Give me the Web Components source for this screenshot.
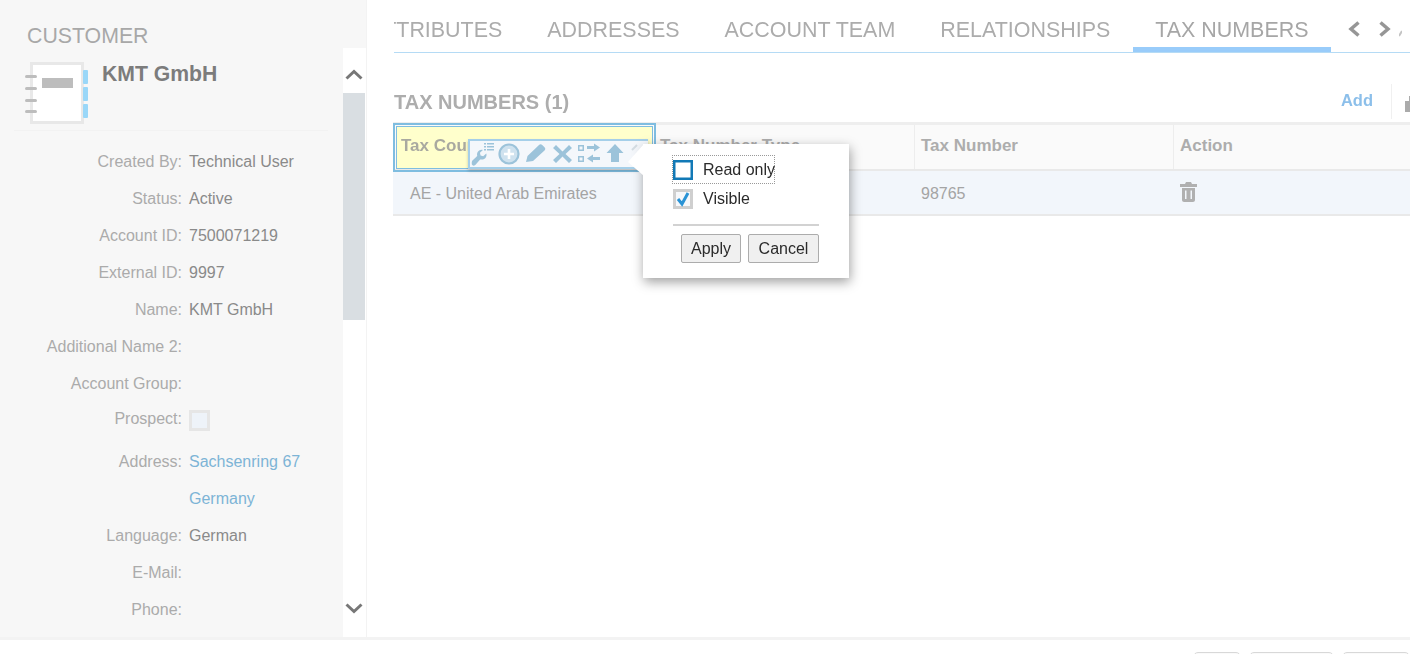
<!DOCTYPE html>
<html lang="en">
<head>
<meta charset="utf-8">
<title>Customer</title>
<style>
  html, body { margin: 0; height: 100%; overflow: hidden; background: #fff; }
  body { font-family: "Liberation Sans", Arial, sans-serif; }
</style>
</head>
<body>
<crm-app></crm-app>
<script>
"use strict";

class CrmField extends HTMLElement {
  constructor() {
    super();
    this.attachShadow({ mode: "open" });
    this.shadowRoot.innerHTML = `
      <style>
        :host { display: grid; grid-template-columns: 182px 1fr; column-gap: 7px; height: 37px; align-items: center; font-size: 16px; }
        :host([tall]) { height: 41px; align-items: start; }
        :host([tall]) #label, :host([tall]) #value { padding-top: 8px; }
        #label { text-align: right; color: #ababab; white-space: nowrap; }
        #value { color: #8a8a8a; white-space: nowrap; }
        :host([link]) #value { color: #7db4d6; }
      </style>
      <div id="label"></div>
      <div id="value"><slot></slot></div>`;
  }
  connectedCallback() {
    this.shadowRoot.querySelector("#label").textContent = this.getAttribute("label") || "";
  }
}
customElements.define("crm-field", CrmField);

class CrmScrollbar extends HTMLElement {
  constructor() {
    super();
    this.attachShadow({ mode: "open" });
    this.shadowRoot.innerHTML = `
      <style>
        :host { display: flex; flex-direction: column; width: 23px; margin-top: 48px; background: #fff; }
        #up { height: 45px; display: flex; align-items: center; justify-content: center; padding-top: 8px; box-sizing: border-box; }
        #track { flex: 1; }
        #thumb { height: 227px; background: #d9dee2; margin-right: 1px; }
        #down { height: 60px; display: flex; justify-content: center; padding-top: 26px; box-sizing: border-box; }
        svg { display: block; margin-left: -2px; }
      </style>
      <div id="up"><svg width="18" height="11" viewBox="0 0 18 11"><path d="M1.500 9.500 9 2.500l7.500 7" fill="none" stroke="#777" stroke-width="3"/></svg></div>
      <div id="track"><div id="thumb"></div></div>
      <div id="down"><svg width="18" height="11" viewBox="0 0 18 11"><path d="M1.500 1.500 9 8.500l7.500-7" fill="none" stroke="#777" stroke-width="3"/></svg></div>`;
  }
}
customElements.define("crm-scrollbar", CrmScrollbar);

class CrmSidebar extends HTMLElement {
  constructor() {
    super();
    this.attachShadow({ mode: "open" });
    this.shadowRoot.innerHTML = `
      <style>
        :host { display: flex; width: 366px; flex: none; background: #f7f7f7; }
        #content { width: 343px; flex: none; overflow: hidden; }
        h2 { margin: 24px 0 0 27px; font-size: 21.300px; line-height: 24px; font-weight: normal; color: #a8a8a8; }
        #head { display: flex; margin: 14px 0 0 25px; height: 62px; }
        #head svg { display: block; flex: none; }
        #name { margin: 0 0 0 14px; font-size: 21.200px; line-height: 24px; font-weight: bold; color: #7c7c7c; }
        hr { border: 0; height: 1px; background: #f2f2f2; margin: 6px 15px 12px 14px; }
      </style>
      <div id="content">
        <h2>CUSTOMER</h2>
        <div id="head">
          <svg width="63" height="62" viewBox="0 0 63 62">
            <rect x="6.500" y="1.500" width="51" height="59" fill="#fff" stroke="#e8e8e8" stroke-width="3"/>
            <g fill="#bdbdbd">
              <rect x="0" y="13" width="12" height="3" rx="1.500"/>
              <rect x="0" y="25" width="12" height="3" rx="1.500"/>
              <rect x="0" y="37" width="12" height="3" rx="1.500"/>
              <rect x="0" y="48" width="12" height="3" rx="1.500"/>
              <rect x="17" y="16" width="31" height="10"/>
            </g>
            <g fill="#9ad7f8">
              <rect x="58" y="8" width="5" height="14" rx="1"/>
              <rect x="58" y="25" width="5" height="14" rx="1"/>
              <rect x="58" y="42" width="5" height="14" rx="1"/>
            </g>
          </svg>
          <p id="name">KMT GmbH</p>
        </div>
        <hr>
        <crm-field label="Created By:">Technical User</crm-field>
        <crm-field label="Status:">Active</crm-field>
        <crm-field label="Account ID:">7500071219</crm-field>
        <crm-field label="External ID:">9997</crm-field>
        <crm-field label="Name:">KMT GmbH</crm-field>
        <crm-field label="Additional Name 2:"></crm-field>
        <crm-field label="Account Group:"></crm-field>
        <crm-field label="Prospect:" tall><svg width="21" height="21" style="display:block"><rect x="1.500" y="1.500" width="18" height="18" fill="#eef3f9" stroke="#e6e6e6" stroke-width="3"/></svg></crm-field>
        <crm-field label="Address:" link>Sachsenring 67</crm-field>
        <crm-field label="" link>Germany</crm-field>
        <crm-field label="Language:">German</crm-field>
        <crm-field label="E-Mail:"></crm-field>
        <crm-field label="Phone:"></crm-field>
      </div>
      <crm-scrollbar></crm-scrollbar>`;
  }
}
customElements.define("crm-sidebar", CrmSidebar);

class CrmTabs extends HTMLElement {
  constructor() {
    super();
    this.attachShadow({ mode: "open" });
    this.shadowRoot.innerHTML = `
      <style>
        :host { display: flex; height: 53px; box-sizing: border-box; margin-left: 1px; border-bottom: 1px solid #b5dbf5; font-size: 21.450px; color: #acacac; }
        #scroller { display: flex; justify-content: flex-end; width: 937px; flex: none; overflow: hidden; }
        .tab { flex: none; padding: 18px 22.500px 0; line-height: 25px; height: 52px; box-sizing: border-box; white-space: nowrap; }
        .tab.active { border-bottom: 5px solid #99ccfa; color: #a6a6a6; }
        #nav { display: flex; gap: 17px; padding: 21px 0 0 16px; }
        svg { display: block; flex: none; }
      </style>
      <div id="scroller">
        <div class="tab">ATTRIBUTES</div>
        <div class="tab">ADDRESSES</div>
        <div class="tab">ACCOUNT TEAM</div>
        <div class="tab">RELATIONSHIPS</div>
        <div class="tab active">TAX NUMBERS</div>
      </div>
      <div id="nav">
        <svg width="14" height="16" viewBox="0 0 14 16"><path d="M11.500 1.500 4 8l7.500 6.500" fill="none" stroke="#969696" stroke-width="3.500"/></svg>
        <svg width="14" height="16" viewBox="0 0 14 16"><path d="M2.500 1.500 10 8l-7.500 6.500" fill="none" stroke="#969696" stroke-width="3.500"/></svg>
        <svg width="3" height="16" viewBox="0 0 3 16" style="margin-left:-10px"><path d="M3 10 0 15" stroke="#c4c4c4" stroke-width="2"/></svg>
      </div>`;
  }
}
customElements.define("crm-tabs", CrmTabs);

class CrmToolbar extends HTMLElement {
  constructor() {
    super();
    this.attachShadow({ mode: "open" });
    this.shadowRoot.innerHTML = `
      <style>
        :host { display: block; position: absolute; left: 75px; top: 14px; width: 180px; height: 30px; box-sizing: border-box; background: #f4f7fb; border: 2px solid #a5cfe9; border-right: 0; box-shadow: 0 2px 3px rgba(0,0,0,.2); }
        svg { display: block; }
      </style>
      <svg width="178" height="26" viewBox="0 0 178 26">
        <g fill="#9cc3da">
          <path transform="translate(0 3) scale(.88)" d="M2 22.500c0 1.500 1.500 2.500 3 2 .8-.3 1.300-.9 1.800-1.500l4.700-5.500c2.800.6 5.400-.3 6.700-2.800.7-1.300.7-2.700.3-3.900l-3.500 3.200-3-1-.7-3 3.400-3.200c-1.700-.5-3.600-.1-5 1.200-1.600 1.500-2 3.500-1.500 5.600l-5.700 5.400c-.3.800-.5 1.500-.5 2z"/>
          <rect x="14" y="2" width="2" height="1.500"/><rect x="17" y="2" width="7" height="1.500"/>
          <rect x="14" y="5" width="2" height="1.500"/><rect x="17" y="5" width="7" height="1.500"/>
          <rect x="14" y="8" width="2" height="1.500"/><rect x="17" y="8" width="7" height="1.500"/>
          <path d="M56 21l1.500-6L69 4c1-1 2.200-1 3.200 0l2.300 2.300c1 1 1 2.200 0 3.200L63 20z"/>
          <path d="M83 7l3-3 6.500 6.500L99 4l3 3-6.500 6 6.500 6-3 3-6.500-6.500L86 22l-3-3 6.500-6z"/>
          <path d="M108 4h6v6h-6zM109.500 5.500v3h3v-3zM108 15h6v6h-6zM109.500 16.500v3h3v-3z" fill-rule="evenodd"/>
          <path d="M117 5h7V2.500l6 4-6 4V8h-7zM130 16h-7v-2.500l-6 4 6 4V19h7z"/>
          <path d="M145 3l8.500 9H149v9h-8v-9h-4.500z"/>
        </g>
        <circle cx="39" cy="13" r="9.500" fill="#cfe2ef" stroke="#9cc3da" stroke-width="2.200"/>
        <path d="M39 8v10M34 13h10" stroke="#fff" stroke-width="2.600"/>
        <path d="M167 4l-5 5" stroke="#d4dde3" stroke-width="2"/>
      </svg>`;
  }
}
customElements.define("crm-toolbar", CrmToolbar);

class CrmPopover extends HTMLElement {
  constructor() {
    super();
    this.attachShadow({ mode: "open" });
    this.shadowRoot.innerHTML = `
      <style>
        :host { display: block; position: absolute; left: 250px; top: 19px; width: 206px; height: 134px; box-sizing: border-box; background: #fff; box-shadow: 1px 4px 11px rgba(0,0,0,.38); padding: 12px 30px 0 30px; color: #2b2b2b; font-size: 16px; font-weight: normal; }
        #arrow { position: absolute; left: -15px; top: 0; display: block; }
        .check { display: flex; align-items: center; gap: 10px; height: 27px; width: 101px; box-sizing: border-box; white-space: nowrap; }
        .check.focus { outline: 1px dotted #999; outline-offset: 0; }
        .check svg { display: block; flex: none; }
        .check + .check { margin-top: 2px; }
        hr { border: 0; height: 2px; background: #d2d2d2; margin: 12px 0 8px; width: 146px; }
        #actions { display: flex; justify-content: flex-end; gap: 7px; width: 146px; }
        .btn { font: inherit; color: #2b2b2b; height: 29px; box-sizing: border-box; padding: 0; border: 1px solid #acacac; border-radius: 2px; background: #f0f0f0; }
      </style>
      <svg id="arrow" width="16" height="33" viewBox="0 0 16 33"><path d="M16 0 0 18l16 14z" fill="#fff"/></svg>
      <div class="check focus"><svg width="20" height="20"><rect x="1.250" y="1.250" width="17.500" height="17.500" fill="#fff" stroke="#1279b6" stroke-width="2.500"/></svg>Read only</div>
      <div class="check"><svg width="20" height="20"><rect x="1.500" y="1.500" width="17" height="17" fill="#f6f8fb" stroke="#cfcfcf" stroke-width="3"/><path d="M5 10l4 5 6-11" fill="none" stroke="#2a93d5" stroke-width="3"/></svg>Visible</div>
      <hr>
      <div id="actions">
        <button class="btn" style="width:60px">Apply</button>
        <button class="btn" style="width:71px">Cancel</button>
      </div>`;
  }
}
customElements.define("crm-popover", CrmPopover);

class CrmTaxTable extends HTMLElement {
  constructor() {
    super();
    this.attachShadow({ mode: "open" });
    this.shadowRoot.innerHTML = `
      <style>
        :host { display: block; position: relative; width: 1040px; border-top: 3px solid #eeeeee; }
        .row { display: grid; grid-template-columns: 261px 260px 259px 1fr; }
        #head { height: 46px; background: #fafafa; border-bottom: 2px solid #e9e9e9; box-sizing: border-box; font-size: 17px; font-weight: bold; color: #adadad; }
        #head div { padding: 11px 0 0 6px; line-height: 20px; border-left: 1px solid #ededed; white-space: nowrap; }
        #head div:first-child { border-left: 0; }
        #head div:nth-child(2) { padding-left: 5px; }
        #body { height: 45px; padding-top: 2px; background: #f2f6fb; border-bottom: 2px solid #e9e9e9; box-sizing: border-box; font-size: 16px; color: #a4a4a4; align-items: center; }
        #body div:first-child { padding-left: 17px; }
        #body .num { padding-left: 7px; }
        #body .act { padding-left: 6px; }
        #body svg { display: block; margin-top: -4px; }
        #sel { position: absolute; left: 0; top: -2px; width: 263px; height: 49px; box-sizing: border-box; border: 2px solid #7fbde0; padding: 1px; }
        #sel-inner { height: 100%; box-sizing: border-box; border: 1px solid #7fbde0; background: #ffffcc; padding: 9px 0 0 4px; font-size: 17px; line-height: 20px; font-weight: bold; color: #a9a9a0; overflow: hidden; white-space: nowrap; }
      </style>
      <div class="row" id="head">
        <div>Tax Country</div>
        <div>Tax Number Type</div>
        <div>Tax Number</div>
        <div>Action</div>
      </div>
      <div class="row" id="body">
        <div>AE - United Arab Emirates</div>
        <div></div>
        <div class="num">98765</div>
        <div class="act"><svg width="19" height="21" viewBox="0 0 19 21"><path d="M7 1h5l1 2h5v3H1V3h5zM3 7h13v12c0 1-1 2-2 2H5c-1 0-2-1-2-2zM6 9.500v8.500h1.500V9.500zM11.500 9.500v8.500h1.500V9.500z" fill="#b0b0b0" fill-rule="evenodd"/></svg></div>
      </div>
      <div id="sel"><div id="sel-inner">Tax Country</div></div>
      <crm-toolbar></crm-toolbar>
      <crm-popover></crm-popover>`;
  }
}
customElements.define("crm-tax-table", CrmTaxTable);

class CrmApp extends HTMLElement {
  constructor() {
    super();
    this.attachShadow({ mode: "open" });
    this.shadowRoot.innerHTML = `
      <style>
        :host { display: flex; flex-direction: column; width: 1410px; height: 654px; overflow: hidden; filter: blur(.35px); }
        #top { display: flex; height: 637px; flex: none; }
        main { flex: 1; min-width: 0; overflow: hidden; border-left: 1px solid #f3f3f3; padding-left: 26px; }
        #bar { display: flex; height: 69px; box-sizing: border-box; }
        h3 { margin: 36px 0 0 1px; font-size: 20px; line-height: 26px; color: #adadad; font-weight: bold; white-space: nowrap; }
        #add { margin: 37px 0 0 auto; font-size: 16.500px; line-height: 20px; font-weight: bold; color: #8cbfea; }
        #tools { display: flex; margin: 31px 0 0 18px; width: 19px; height: 35px; border-left: 1px solid #f0f0f0; overflow: hidden; box-sizing: border-box; flex: none; padding: 12px 0 0 13px; }
        footer { display: flex; justify-content: flex-end; gap: 8px; flex: 1; border-top: 3px solid #f3f3f3; padding-top: 12px; overflow: hidden; box-sizing: border-box; }
        .foot-btn { height: 24px; flex: none; border: 1px solid #d8d8d8; border-radius: 5px; box-sizing: border-box; background: #fafafa; }
      </style>
      <div id="top">
        <crm-sidebar></crm-sidebar>
        <main>
          <crm-tabs></crm-tabs>
          <div id="bar">
            <h3>TAX NUMBERS (1)</h3>
            <div id="add">Add</div>
            <div id="tools"><svg width="16" height="16" viewBox="0 0 16 16" style="flex:none"><path d="M0 5h4V0h8v5h4v11H0z" fill="#ababab"/></svg></div>
          </div>
          <crm-tax-table></crm-tax-table>
        </main>
      </div>
      <footer>
        <div class="foot-btn" style="width:48px"></div>
        <div class="foot-btn" style="width:85px"></div>
        <div class="foot-btn" style="width:68px"></div>
      </footer>`;
  }
}
customElements.define("crm-app", CrmApp);
</script>
</body>
</html>
